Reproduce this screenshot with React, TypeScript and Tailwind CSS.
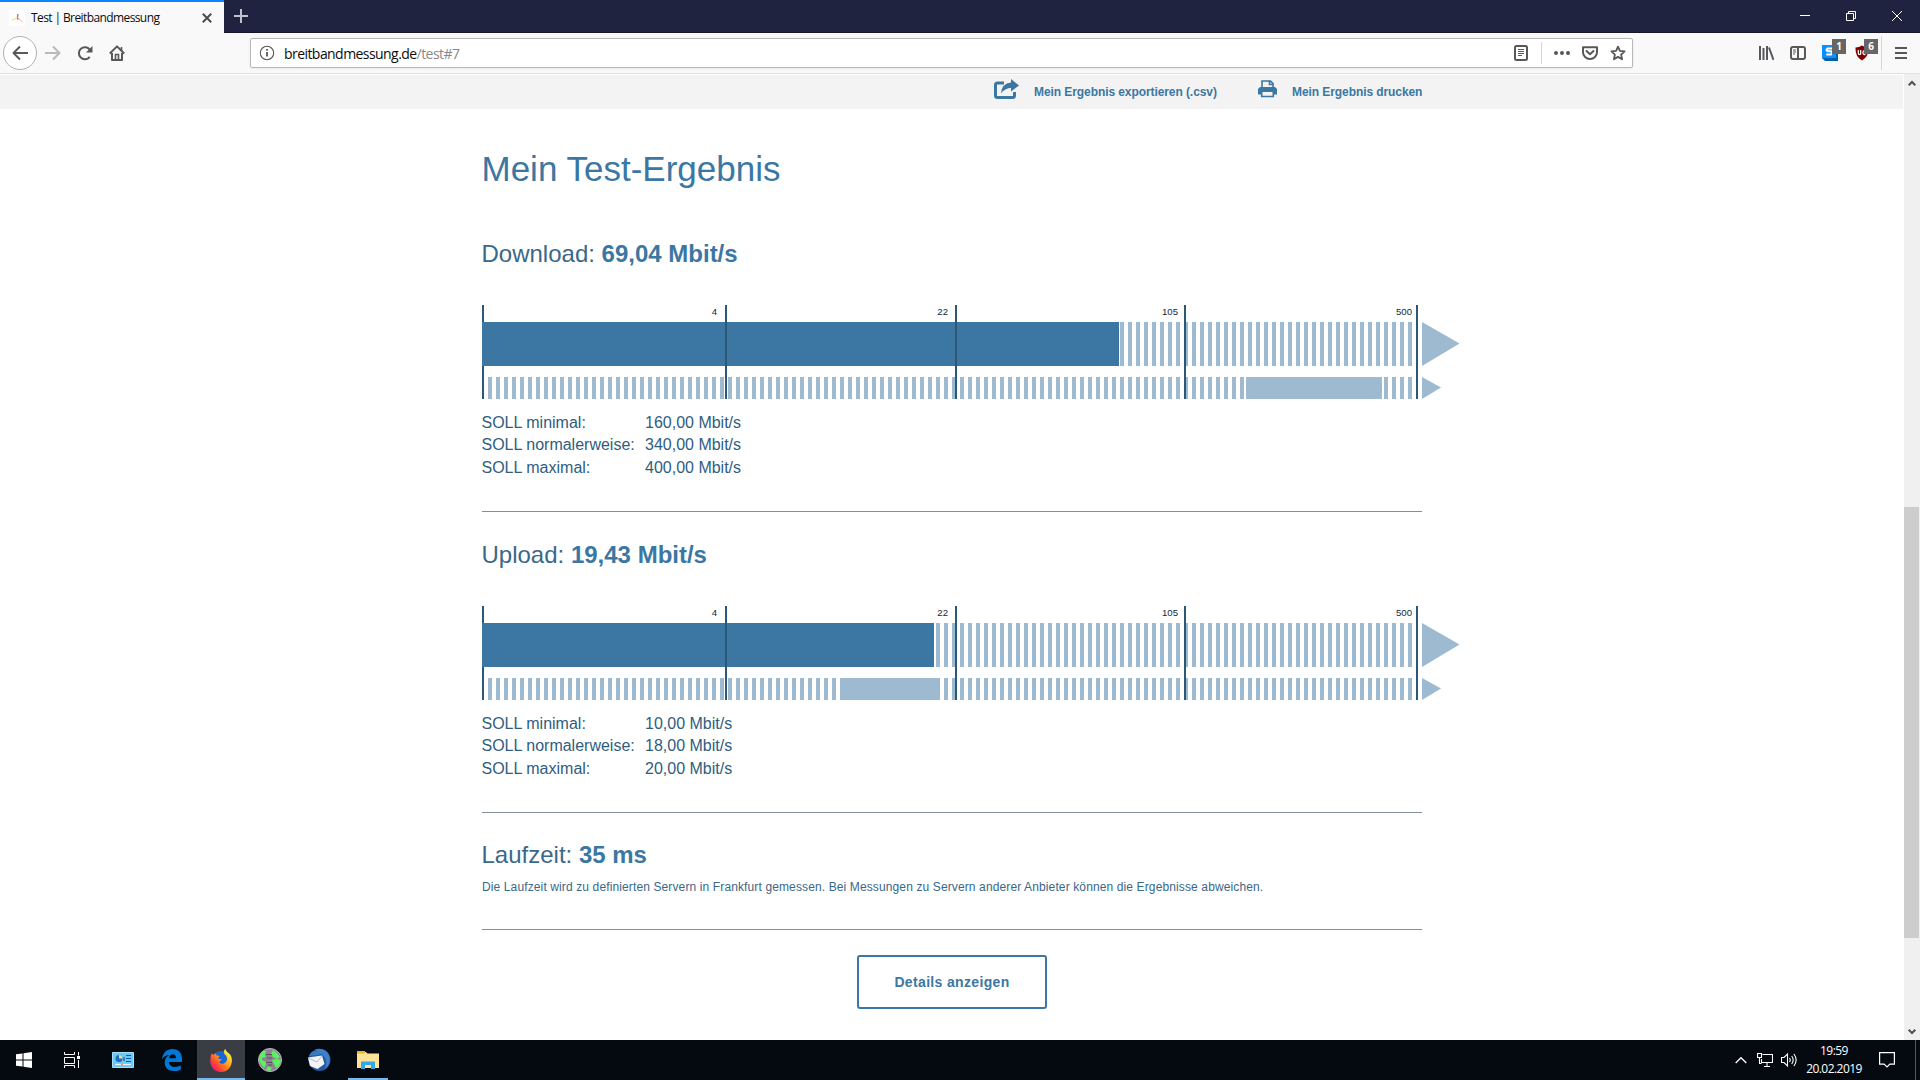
import type { ReactNode } from "react"
import { clsx } from "clsx"

const results = [
  {
    label: "Download:",
    value: "69,04 Mbit/s",
    bar: 637,
    range: [764, 900],
    targets: [
      ["SOLL minimal:", "160,00 Mbit/s"],
      ["SOLL normalerweise:", "340,00 Mbit/s"],
      ["SOLL maximal:", "400,00 Mbit/s"],
    ],
  },
  {
    label: "Upload:",
    value: "19,43 Mbit/s",
    bar: 452,
    range: [358, 458],
    targets: [
      ["SOLL minimal:", "10,00 Mbit/s"],
      ["SOLL normalerweise:", "18,00 Mbit/s"],
      ["SOLL maximal:", "20,00 Mbit/s"],
    ],
  },
]

// logarithmic scale, positions in px
const ticks = [
  { left: 0, label: "", gap: 0 },
  { left: 243, label: "4", gap: 8 },
  { left: 473, label: "22", gap: 7 },
  { left: 702, label: "105", gap: 6 },
  { left: 934, label: "500", gap: 4 },
]

function Icon({ w = 16, h = 16, className, children }: { w?: number; h?: number; className?: string; children: ReactNode }) {
  return (
    <svg width={w} height={h} viewBox={`0 0 ${w} ${h}`} fill="none" stroke="currentColor" strokeWidth="2" className={clsx("shrink-0", className)}>
      {children}
    </svg>
  )
}

function TitleBar() {
  return (
    <div className="flex h-[33px] bg-[#202340] font-['Open_Sans',sans-serif]">
      <div className="flex w-[224px] items-center border-t-2 border-[#0a84ff] bg-[#f9f9fa] pl-[9px] pr-[12px] pt-[1px]">
        <Icon className="bg-white">
          <path d="M8.500 7L9 4" stroke="#777" strokeWidth="1.200" />
          <path d="M7.500 8L3 10.500" stroke="#f8e08e" strokeWidth="1.200" />
          <path d="M9 8L13.500 12" stroke="#f9cdc6" strokeWidth="1.200" />
          <path d="M7.500 7.500h2v2h-1.500z" fill="#d9644f" stroke="none" />
        </Icon>
        <span className="ml-[6px] grow whitespace-nowrap text-[12px] tracking-[-0.6px] text-[#0c0c0d]">Test | Breitbandmessung</span>
        <Icon w={10} h={10} className="text-[#4a4a4f]">
          <path d="M.8.8l8.400 8.400M9.200.8L.8 9.200" />
        </Icon>
      </div>
      <div className="flex grow items-center border-b border-[#14162b] pl-[10px] pr-[18px]">
        <Icon w={14} h={14} className="text-[#c0c1cc]">
          <path d="M7 0v14M0 7h14" />
        </Icon>
        <div className="ml-auto flex items-center gap-9 text-white">
          <Icon w={10} h={10}>
            <path d="M0 4.500h10" strokeWidth="1" />
          </Icon>
          <Icon w={10} h={10}>
            <path d="M.5 2.500h7v7h-7zM2.500 2.500v-2h7v7h-2" strokeWidth="1" />
          </Icon>
          <Icon w={10} h={10}>
            <path d="M0 0l10 10M10 0L0 10" strokeWidth="1" />
          </Icon>
        </div>
      </div>
    </div>
  )
}

function Badge({ children }: { children: ReactNode }) {
  return (
    <span className="absolute -top-[6px] left-[10px] flex h-[15px] w-[14px] items-center justify-center bg-[#666] text-[10px] font-bold text-white">
      {children}
    </span>
  )
}

function NavBar() {
  return (
    <div className="flex h-[41px] items-center border-b border-[#e0e0e1] bg-[#f9f9fa] pl-[3px] pr-[13px] font-['Open_Sans',sans-serif] text-[#58585b]">
      <div className="flex size-[34px] items-center justify-center rounded-full border border-[#b1b1b1] bg-white">
        <Icon>
          <path d="M8 1.500L1.500 8L8 14.500M2 8h14" strokeLinejoin="round" />
        </Icon>
      </div>
      <Icon className="ml-[8px] text-[#b9b9ba]">
        <path d="M8 1.500L14.500 8L8 14.500M14 8H0" strokeLinejoin="round" />
      </Icon>
      <Icon className="ml-[16px]">
        <path d="M12.700 11.800A6 6 0 1 1 13 5" />
        <path d="M15.500 1v6.500H9z" fill="currentColor" stroke="none" />
      </Icon>
      <Icon className="ml-[16px]">
        <path d="M.8 8.500L8 1.400l7.200 7.100M3 8v7h10V8" strokeLinejoin="round" />
        <path d="M6.500 15V9.500h3V15M12.500 2v4" strokeWidth="1.600" />
      </Icon>
      <div className="ml-[125px] flex h-[30px] w-[1383px] items-center rounded-[2px] border border-[#b8b8ba] bg-white pl-[8px] pr-[6px] shadow-[0_1px_3px_rgba(0,0,0,0.06)]">
        <Icon>
          <circle cx="8" cy="8" r="6.700" strokeWidth="1.100" />
          <path d="M8 7v4.500M8 4v1.700" strokeWidth="1.800" />
        </Icon>
        <span className="ml-[9px] mt-[1px] grow whitespace-nowrap text-[14px] tracking-[-0.56px] text-[#0c0c0d]">
          breitbandmessung.de<span className="text-[#88888a]">/test#7</span>
        </span>
        <Icon>
          <rect x="2" y="1" width="12" height="14" rx="1.500" />
          <path d="M5 4.500h6M5 6.500h6M5 8.500h6M5 10.500h4" strokeWidth="1" />
        </Icon>
        <div className="ml-[12px] h-[22px] w-px bg-[#d7d7db]" />
        <Icon className="ml-[12px]">
          <circle cx="2" cy="8" r="2" fill="currentColor" stroke="none" />
          <circle cx="8" cy="8" r="2" fill="currentColor" stroke="none" />
          <circle cx="14" cy="8" r="2" fill="currentColor" stroke="none" />
        </Icon>
        <Icon className="ml-[12px]">
          <path d="M1 2.200h14v5a7 6.800 0 0 1-14 0z" strokeLinejoin="round" />
          <path d="M4.500 6L8 9.300L11.500 6" strokeLinecap="round" strokeLinejoin="round" />
        </Icon>
        <Icon className="ml-[12px]">
          <path d="M8 1.600l1.900 4.300 4.700.5-3.500 3.200 1 4.700L8 11.900l-4.100 2.400 1-4.700L1.400 6.400l4.700-.5z" strokeWidth="1.800" strokeLinejoin="round" />
        </Icon>
      </div>
      <Icon className="ml-auto">
        <path d="M2 1v14M5.500 3v12M9 1v14M11 2.500L15.500 15" />
      </Icon>
      <Icon className="ml-[16px]">
        <rect x="1" y="2" width="14" height="12" rx="2" />
        <path d="M8 2v12" />
        <path d="M3 5h3M3 7h3M3 9h2" strokeWidth="1" />
      </Icon>
      <div className="relative ml-[16px] size-4">
        <Icon>
          <path d="M0 0h14l2 3v13H3l-3-3z" fill="#0060b0" stroke="none" />
          <path d="M0 0h14v13H0z" fill="#0a90ff" stroke="none" />
          <path d="M10 3.500H5.500L4.500 5l1 1.300h3.600l1 1.400L9 9.500H4.300" stroke="#fff" />
        </Icon>
        <Badge>1</Badge>
      </div>
      <div className="relative ml-[16px] size-4">
        <Icon>
          <path d="M8 .5c2 1.300 4 2 6.500 2 0 6-1.500 10-6.500 13C3 12.500 1.500 8.500 1.500 2.500c2.500 0 4.500-.7 6.500-2z" fill="#800000" stroke="none" />
          <path d="M4.300 5v3.500q0 1 1.200 1t1.200-1V5M11.500 5.700q-2.500-.3-2.500 2t2.500 1.800" stroke="#fff" strokeWidth="1.200" />
        </Icon>
        <Badge>6</Badge>
      </div>
      <div className="ml-[11px] h-[34px] w-px bg-[#d7d7db]" />
      <Icon w={12} h={12} className="ml-[13px]">
        <path d="M0 1h12M0 6h12M0 11h12" />
      </Icon>
    </div>
  )
}

function ActionBar() {
  return (
    <div className="mt-px flex h-[34px] items-start bg-[#f3f3f3] pl-[994px] text-[12px] font-bold leading-[14px] tracking-[-0.08px] text-[#3b77a2]">
      <Icon w={25} h={20} className="mt-[4px]">
        <path d="M10 4H3.500Q1.500 4 1.500 6v10.500q0 2 2 2h15q2 0 2-2V13" strokeWidth="3" />
        <path d="M17 0l8 6.500-8 6v-3.500q-6 0-10 5.500Q7.500 4.500 17 3.500z" fill="currentColor" stroke="none" />
      </Icon>
      <span className="ml-[15px] mt-[10px] w-[183px] whitespace-nowrap">Mein Ergebnis exportieren (.csv)</span>
      <Icon w={19} h={18} className="ml-[41px] mt-[5px]">
        <path d="M4 8V1h8.500L15 3.500V8M11.500 1v3.500H15" strokeWidth="1.600" />
        <path d="M2 7h15l2 2v5.500h-3.500V12h-12v2.500H0V9z" fill="currentColor" stroke="none" />
        <path d="M3.700 12v4.500h11.600V12" strokeWidth="1.600" />
      </Icon>
      <span className="ml-[15px] mt-[10px] whitespace-nowrap">Mein Ergebnis drucken</span>
    </div>
  )
}

function Chart({ bar, range }: { bar: number; range: number[] }) {
  return (
    <div className="relative mt-[36px] flex h-[94px] w-[978px] flex-col pt-[17px]">
      <div className="flex h-[44px] gap-[6px]">
        <div className="w-[934px] bg-[repeating-linear-gradient(90deg,#9dbad0_0px,#9dbad0_4px,transparent_4px,transparent_8px)] bg-[position:6px_0] bg-no-repeat">
          <div className="h-full bg-[#3b77a2]" style={{ width: bar }} />
        </div>
        <svg width="38" height="44" className="text-[#9dbad0]">
          <path d="M0 0L37.500 21.500L0 44z" fill="currentColor" />
        </svg>
      </div>
      <div className="mt-[11px] flex h-[22px] gap-[6px]">
        <div className="w-[934px] bg-[repeating-linear-gradient(90deg,#9dbad0_0px,#9dbad0_4px,transparent_4px,transparent_8px)] bg-[position:6px_0] bg-no-repeat">
          <div className="h-full bg-[#9dbad0]" style={{ width: range[1] - range[0], marginLeft: range[0] }} />
        </div>
        <svg width="20" height="22" className="text-[#9dbad0]">
          <path d="M0 0L19 10.500L0 22z" fill="currentColor" />
        </svg>
      </div>
      {ticks.map((tick) => (
        <div
          key={tick.left}
          className={clsx("absolute top-0 w-[2px] bg-[#2b5876]", tick.left === 0 ? "h-[17px]" : "h-[94px]")}
          style={{ left: tick.left }}
        >
          <span className="absolute top-[1px] text-[9.600px] leading-[11px] text-[#12263a]" style={{ right: 2 + tick.gap }}>
            {tick.label}
          </span>
        </div>
      ))}
      <div className="absolute left-0 top-[61px] h-[33px] w-[2px] bg-[#2b5876]" />
    </div>
  )
}

function ResultPage() {
  return (
    <main className="ml-[482px] w-[940px] pt-[40px] text-[#2f5d80]">
      <h1 className="-ml-[0.500px] text-[35px] leading-[40px] text-[#3b77a2]">Mein Test-Ergebnis</h1>
      <div className="h-[22px]" />
      {results.map((result) => (
        <section key={result.label} className="h-[301px] border-b border-[#7f91a0] pt-[28px]">
          <h2 className="-ml-[0.500px] text-[24px] leading-[30px] text-[#3a6889]">
            {result.label} <b className="text-[#3b77a2]">{result.value}</b>
          </h2>
          <Chart bar={result.bar} range={result.range} />
          <dl className="-ml-[0.500px] mt-[13px] grid grid-cols-[163.500px_1fr] text-[16px] leading-[22.400px]">
            {result.targets.map(([name, value]) => (
              <div key={name} className="contents">
                <dt>{name}</dt>
                <dd>{value}</dd>
              </div>
            ))}
          </dl>
        </section>
      ))}
      <section className="h-[117px] border-b border-[#7f91a0] pt-[27px] text-[#3a6889]">
        <h2 className="-ml-[0.500px] text-[24px] leading-[30px]">
          Laufzeit: <b className="text-[#3b77a2]">35 ms</b>
        </h2>
        <p className="mt-[9px] whitespace-nowrap text-[12px] leading-[16px] tracking-[0.122px]">
          Die Laufzeit wird zu definierten Servern in Frankfurt gemessen. Bei Messungen zu Servern anderer Anbieter können die Ergebnisse abweichen.
        </p>
      </section>
      <button className="mx-auto mt-[25px] block h-[54px] w-[190px] rounded-[3px] border-2 border-[#3b77a2] text-[14px] font-bold tracking-[0.340px] text-[#3b77a2]">
        Details anzeigen
      </button>
    </main>
  )
}

function Scrollbar() {
  return (
    <div className="flex w-[16px] flex-col items-center bg-[#f0f0f0] text-[#505050]">
      <Icon w={8} h={6} className="mt-[6px]">
        <path d="M.7 5.300L4 2l3.300 3.300" />
      </Icon>
      <div className="mt-[421px] h-[431px] w-[15px] self-start bg-[#cdcdcd]" />
      <Icon w={8} h={6} className="mb-[5px] mt-auto">
        <path d="M.7.700L4 4l3.300-3.300" />
      </Icon>
    </div>
  )
}

function Task({ active, open, children }: { active?: boolean; open?: boolean; children: ReactNode }) {
  return (
    <div className={clsx("flex h-full w-[48px] flex-col items-center justify-center pt-[2px]", active && "bg-[#3a3d43]")}>
      <div className="flex grow items-center">{children}</div>
      <div className={clsx("h-[2px]", active ? "w-[48px] bg-[#76b9ed]" : "w-[40px]", open && "bg-[#76b9ed]")} />
    </div>
  )
}

function Taskbar() {
  return (
    <div className="flex h-[40px] bg-[#050a10] font-['Open_Sans',sans-serif] text-white">
      <div className="flex">
        <Task>
          <Icon>
            <path d="M0 2.300L6.500 1.400v6.100H0zM7.500 1.200L16 0v7.500H7.500zM0 8.500h6.500v6.100L0 13.700zM7.500 8.500H16V16l-8.500-1.200z" fill="currentColor" stroke="none" />
          </Icon>
        </Task>
        <Task>
          <Icon>
            <path d="M.5 0v2.500h10V0M.5 5.500h10v6H.5zM.5 16v-2.500h10V16M14.500 0v3.500M14.500 8v8" strokeWidth="1" />
            <path d="M13 4h3v3h-3z" fill="currentColor" stroke="none" />
          </Icon>
        </Task>
        <div className="ml-[3px] flex gap-px">
          <Task>
            <Icon w={22} h={16}>
              <path d="M.5.500h21v15H.5z" fill="#6cc8f5" stroke="#a8e0fb" strokeWidth="1" />
              <circle cx="7" cy="6.500" r="3.500" fill="#1c6fb8" stroke="none" />
              <path d="M7 6.500V3a3.500 3.500 0 0 1 3.500 3.500z" fill="#f2d9a0" stroke="none" />
              <path d="M14 3.500h5M14 6.500h5M14 9.500h5M12 5v4" stroke="#135c9c" strokeWidth="1.200" />
              <path d="M3 12.500h16" stroke="#e7f7ff" strokeWidth="1.200" />
              <path d="M9 11.500h2v2H9z" fill="#ef9c43" stroke="none" />
            </Icon>
          </Task>
          <Task>
            <Icon w={20} h={22}>
              <path
                d="M0 10C1 3.500 5 0 10.500 0C16.500 0 20 4 20 9.500V13H7c.2 3.500 3 5 6 5 2.200 0 4-.6 5.800-1.700v4.200C17 21.500 14.800 22 12.300 22 6 22 2.700 18.500 2.700 13.500c0-3.300 1.600-6 4.800-7.500C4.500 6 2 7.300 0 10zM7.200 9.300h6.700C13.900 6.800 12.800 5.300 10.800 5.300S7.500 6.800 7.200 9.300z"
                fill="#0078d7"
                stroke="none"
              />
            </Icon>
          </Task>
          <Task active>
            <Icon w={22} h={23}>
              <defs>
                <linearGradient id="fox" x1="1" y1="0" x2="0.100" y2="0.900">
                  <stop offset="0.150" stopColor="#fff23a" />
                  <stop offset="0.500" stopColor="#ff9a1a" />
                  <stop offset="0.800" stopColor="#ff4036" />
                  <stop offset="1" stopColor="#e31587" />
                </linearGradient>
              </defs>
              <circle cx="11" cy="10.500" r="8.500" fill="#1467d8" stroke="none" />
              <path
                d="M1.500 4.500L4 6l1-2 2 2.500 2.500.5L8 9.500l4 1-2.500 2c-.5 1.500 2 3 4.500 2 3-1.500 4-5 2-8C13 4 13.500 1.500 15.500 0c.3 2.500 3.500 4 5 6 3.500 6 .5 17-9.500 17S-1.500 13 1.500 4.500z"
                fill="url(#fox)"
                stroke="none"
              />
            </Icon>
          </Task>
          <Task>
            <Icon w={24} h={24}>
              <circle cx="12" cy="12" r="11.500" fill="#8d8393" stroke="#b9b9be" strokeWidth="1" />
              <path d="M2 7l3-4 3 0-1 4 1 2-4 1 0 2 4 2 0 3-2 3-3-4-2-4zM15 2l4 3 3 4-3 2-4-2-2-3zM14 12l5-1 4 1-2 6-3 2-2-4zM10 18l4 2-2 3-4-1z" fill="#5af25e" stroke="none" />
              <path d="M8 6.500h6M9 10h5M8 14.500h6M10 17h4" stroke="#574e5e" strokeWidth="1" />
            </Icon>
          </Task>
          <Task>
            <Icon w={24} h={24}>
              <circle cx="12.500" cy="12" r="11" fill="#225a9f" stroke="none" />
              <path d="M8 1.500C16-1 22 4 22.500 9c1 5-1 10-5 12C21 15 19 8 13 5.500z" fill="#3d7fc8" stroke="none" />
              <path d="M1 9.500l14-2 2.500 8.500-7 5L3 18z" fill="#f4f4f6" stroke="none" />
              <path d="M1.500 10l8.500 4 5-6" stroke="#b4bbc9" strokeWidth="1" />
              <path d="M2 8q2-5 7-5l5 2-2 2z" fill="#397bc4" stroke="none" />
            </Icon>
          </Task>
          <Task open>
            <Icon w={22} h={18}>
              <path d="M0 1h9l1.500 1.500H22V17H0z" fill="#ffe396" stroke="none" />
              <path d="M0 0h8v2.500H0z" fill="#f0b429" stroke="none" />
              <path d="M4 18v-7.500h14V18h-4v-4H8v4z" fill="#31a9e8" stroke="none" />
            </Icon>
          </Task>
        </div>
      </div>
      <div className="ml-auto flex items-center">
        <Icon w={12} h={8}>
          <path d="M.7 7L6 1.700L11.300 7" strokeWidth="1.300" />
        </Icon>
        <Icon className="ml-[10px]">
          <path d="M5.500 2.500h10v8H4.500V7M7 14.500h6M10 10.500v4" strokeWidth="1.100" />
          <path d="M.5 1.500h4v4h-4zM2.500 5.500v6h2" strokeWidth="1.100" />
        </Icon>
        <Icon className="ml-[8px]">
          <path d="M.5 5.500h2.500L6.500 2v12L3 10.500H.5z" strokeWidth="1.100" />
          <path d="M8.500 6q1.500 2 0 4M10.700 4q3 4 0 8M12.900 2q4.500 6 0 12" strokeWidth="1.100" />
        </Icon>
        <div className="ml-[7px] w-[60px] whitespace-nowrap text-center text-[12px] leading-[18px] tracking-[-0.550px]">
          <div>19:59</div>
          <div>20.02.2019</div>
        </div>
        <Icon className="ml-[15px]">
          <path d="M.6.600h14.800v11.500h-4.500L8 15l-2.900-2.900H.6z" strokeWidth="1.200" />
        </Icon>
        <div className="ml-[20px] mr-[4px] h-full w-px bg-[#55595e]" />
      </div>
    </div>
  )
}

export default function App() {
  return (
    <div className="flex h-[1080px] w-[1920px] flex-col overflow-hidden bg-white font-['Liberation_Sans',Arial,sans-serif]">
      <TitleBar />
      <NavBar />
      <div className="flex h-[966px]">
        <div className="mr-px w-[1903px]">
          <ActionBar />
          <ResultPage />
        </div>
        <Scrollbar />
      </div>
      <Taskbar />
    </div>
  )
}
